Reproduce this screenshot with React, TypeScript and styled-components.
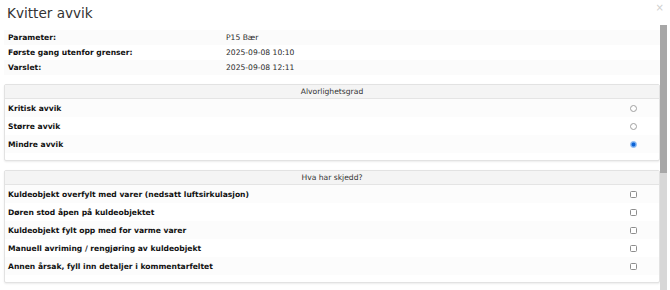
import styled, { createGlobalStyle } from "styled-components";

const GlobalStyle = createGlobalStyle`
  html, body {
    margin: 0;
    padding: 0;
    background: #fff;
  }
  body {
    font-family: "DejaVu Sans", Verdana, sans-serif;
    font-size: 7.6px;
    color: #111;
  }
`;

const Modal = styled.div`
  position: relative;
  width: 670px;
  height: 290px;
  display: flex;
  flex-direction: column;
  padding-right: 10px;
  box-sizing: border-box;
  overflow: hidden;
`;

const Header = styled.div`
  height: 25px;
  flex: none;
  display: flex;
  align-items: flex-start;
  justify-content: space-between;
  padding: 4px 0 0 7px;
  box-sizing: border-box;

  h1 {
    margin: 0;
    font-size: 13.6px;
    font-weight: normal;
    color: #333;
    line-height: 18px;
  }
`;

const CloseButton = styled.button`
  border: none;
  background: none;
  padding: 0;
  margin: -1px -4px 0 0;
  font-family: "DejaVu Sans", sans-serif;
  font-size: 10px;
  line-height: 10px;
  color: #cfcfcf;
  cursor: pointer;
`;

const Body = styled.div`
  flex: 1;
  overflow: hidden;
  padding: 5px 0 0 4px;
`;

// drawn scrollbar over the right edge of the scroll area
const ScrollTrack = styled.div`
  position: absolute;
  top: 25px;
  right: 3px;
  bottom: 0;
  width: 7px;
  background: #d7d7d7;
`;

const ScrollThumb = styled.div`
  height: 148px;
  background: #a7a7a7;
`;

const InfoTable = styled.div`
  display: grid;
  grid-template-columns: 218px 1fr;
  margin-bottom: 9px;
`;

const InfoRow = styled.div`
  display: contents;

  & > span {
    height: 15px;
    line-height: 15px;
    padding-left: 4px;
  }
  &:nth-child(odd) > span {
    background: #fbfbfb;
  }
  & > span:first-child {
    font-weight: bold;
    color: #111;
  }
  & > span:last-child {
    color: #2a2a2a;
  }
`;

const Card = styled.section`
  border: 1px solid #e2e2e2;
  border-radius: 2px;
  box-shadow: 0 1px 2px rgba(0, 0, 0, 0.08);
  padding-bottom: 7px;
  margin-bottom: 9px;
  background: #fff;
`;

const CardTitle = styled.div`
  height: 13px;
  line-height: 13px;
  text-align: center;
  background: #f4f4f4;
  border-bottom: 1px solid #e4e4e4;
  color: #333;
`;

const OptionRow = styled.label`
  display: flex;
  align-items: center;
  justify-content: space-between;
  height: 18px;
  padding: 0 22px 0 3px;
  font-weight: bold;
  color: #111;

  &:nth-child(even) {
    background: #fcfcfc;
  }
`;

const Radio = styled.input.attrs({ type: "radio" })`
  appearance: none;
  margin: 0;
  width: 7px;
  height: 7px;
  border-radius: 50%;
  border: 1px solid #a0a0a0;
  box-sizing: border-box;
  background: #fff;

  &:checked {
    border-color: #7fb2f0;
    background: radial-gradient(circle, #0b63d6 0 40%, #5d9cec 60%, #cfe2fb 100%);
  }
`;

const Checkbox = styled.input.attrs({ type: "checkbox" })`
  appearance: none;
  margin: 0;
  width: 7px;
  height: 7px;
  border-radius: 1.5px;
  border: 1px solid #8d8d8d;
  box-sizing: border-box;
  background: #fff;
`;

const info = [
  ["Parameter:", "P15 Bær"],
  ["Første gang utenfor grenser:", "2025-09-08 10:10"],
  ["Varslet:", "2025-09-08 12:11"],
];

const severities = ["Kritisk avvik", "Større avvik", "Mindre avvik"];

const causes = [
  "Kuldeobjekt overfylt med varer (nedsatt luftsirkulasjon)",
  "Døren stod åpen på kuldeobjektet",
  "Kuldeobjekt fylt opp med for varme varer",
  "Manuell avriming / rengjøring av kuldeobjekt",
  "Annen årsak, fyll inn detaljer i kommentarfeltet",
];

export default function App() {
  return (
    <>
      <GlobalStyle />
      <Modal>
        <Header>
          <h1>Kvitter avvik</h1>
          <CloseButton aria-label="Lukk">×</CloseButton>
        </Header>
        <Body>
          <InfoTable>
            {info.map(([label, value]) => (
              <InfoRow key={label}>
                <span>{label}</span>
                <span>{value}</span>
              </InfoRow>
            ))}
          </InfoTable>

          <Card>
            <CardTitle>Alvorlighetsgrad</CardTitle>
            {severities.map((s) => (
              <OptionRow key={s}>
                {s}
                <Radio name="severity" defaultChecked={s === "Mindre avvik"} />
              </OptionRow>
            ))}
          </Card>

          <Card>
            <CardTitle>Hva har skjedd?</CardTitle>
            {causes.map((c) => (
              <OptionRow key={c}>
                {c}
                <Checkbox />
              </OptionRow>
            ))}
          </Card>
        </Body>
        <ScrollTrack>
          <ScrollThumb />
        </ScrollTrack>
      </Modal>
    </>
  );
}
